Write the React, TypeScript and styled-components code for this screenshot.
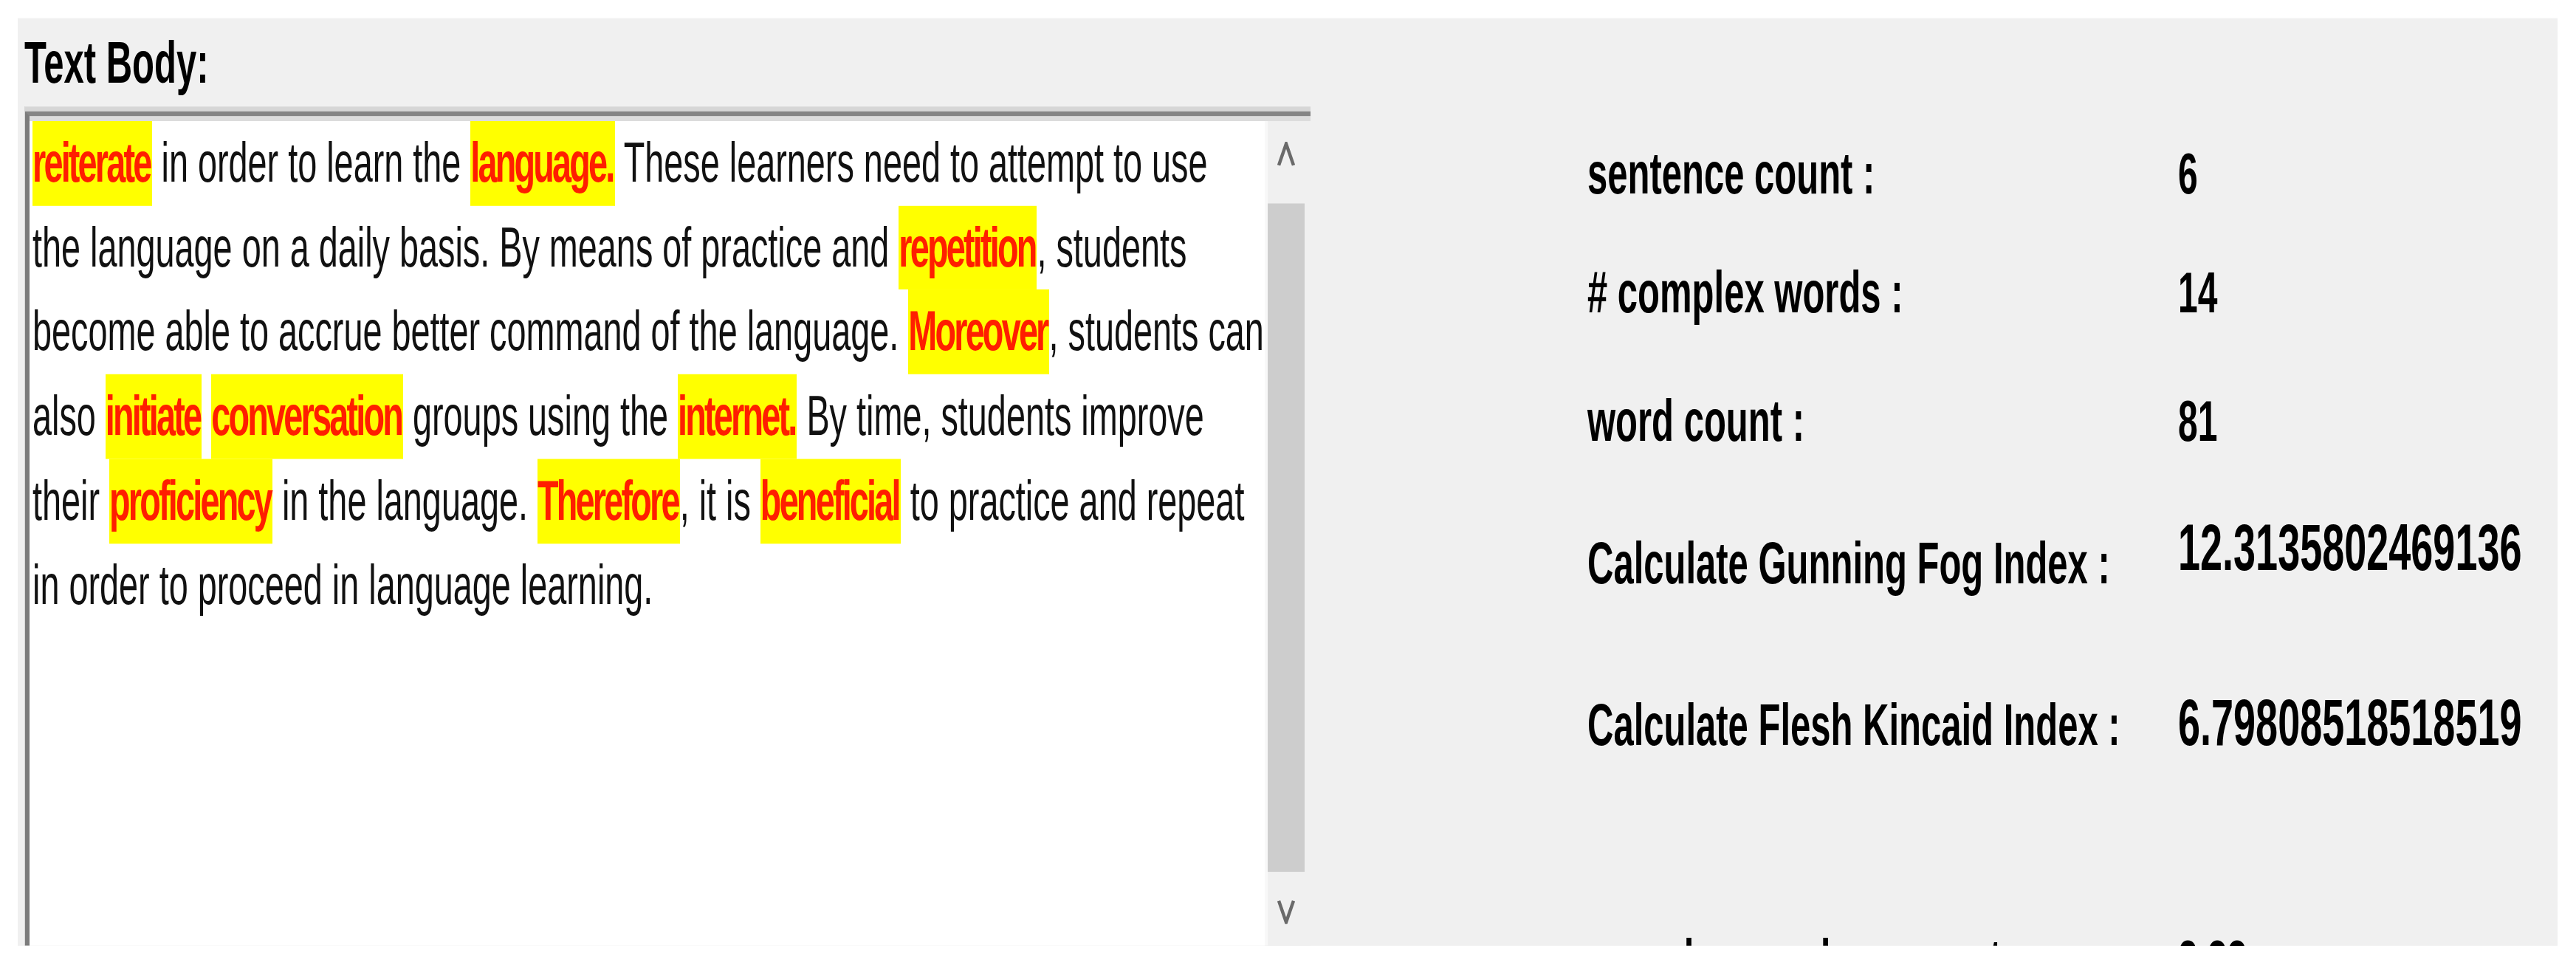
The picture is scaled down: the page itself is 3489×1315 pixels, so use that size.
import React from 'react';
import styled, { createGlobalStyle } from 'styled-components';

// the capture is stretched vertically, so the page is laid out flat and scaled on Y
const STRETCH = 1.64;
const px = (real: number) => `${(real / STRETCH).toFixed(2)}px`;

const GlobalStyle = createGlobalStyle`
	body {
		margin: 0;
		padding: 0;
		background: #fff;
		font-family: 'Liberation Sans', Arial, sans-serif;
	}
`;

const Viewport = styled.div`
	width: 3489px;
	height: 1315px;
	overflow: hidden;
	background: #fff;
`;

const Screen = styled.div`
	box-sizing: border-box;
	width: 3489px;
	height: ${px(1315)};
	padding: ${px(25)} 0 0 24px;
	transform: scaleY(${STRETCH});
	transform-origin: 0 0;
`;

const Window = styled.div`
	display: flex;
	width: 3440px;
	height: ${px(1256)};
	background: #f0f0f0;
	overflow: hidden;
`;

const LeftColumn = styled.div`
	display: flex;
	flex-direction: column;
	flex: none;
	width: 1742px;
	padding-left: 9px;
`;

const Caption = styled.div`
	margin-top: ${px(19)};
	font-size: 49px;
	font-weight: bold;
	line-height: 1;
	color: #000;
`;

const TextBox = styled.div`
	display: flex;
	flex-direction: column;
	flex: 1;
	min-height: 0;
	margin-top: ${px(19.6)};
	border-top: ${px(7)} solid #d6d6d6;
	border-left: 1px solid #d6d6d6;
`;

const Frame = styled.div`
	display: flex;
	flex-direction: column;
	flex: 1;
	min-height: 0;
	border-top: ${px(7)} solid #858585;
	border-left: 6px solid #7c7c7c;
`;

const Body = styled.div`
	display: flex;
	flex: 1;
	min-height: 0;
	border-top: ${px(7)} solid #dcdcdc;
`;

const Document = styled.div`
	flex: 1;
	padding-left: 4px;
	background: #fff;
	color: #111;
	font-size: 46.8px;
	line-height: ${px(114.4)};
	overflow: hidden;
`;

const Line = styled.div`
	white-space: nowrap;
`;

const Mark = styled.span`
	display: inline-block;
	padding-right: 2px;
	background: #ffff00;
	color: #ff1e00;
	font-weight: bold;
	letter-spacing: -2.8px;
`;

const Scrollbar = styled.div`
	display: flex;
	flex-direction: column;
	flex: none;
	box-sizing: border-box;
	width: 62px;
	padding-right: 8px;
	border-left: 4px solid #f8f8f8;
	background: #f0f0f0;
`;

const ScrollButton = styled.div<{ $height?: number; $pad: number }>`
	display: flex;
	justify-content: center;
	align-items: flex-start;
	box-sizing: border-box;
	padding-top: ${(p) => px(p.$pad)};
	${(p) => (p.$height ? `height: ${px(p.$height)};` : 'flex: 1;')}
`;

const Thumb = styled.div`
	height: ${px(906)};
	background: #cdcdcd;
`;

const RightColumn = styled.div`
	display: flex;
	flex-direction: column;
	padding-left: 375px;
`;

const StatRow = styled.div<{ $gap: number }>`
	flex: none;
	height: 60px;
	margin-top: ${(p) => px(p.$gap)};
	font-size: 49px;
	font-weight: bold;
	line-height: 60px;
	color: #000;
	white-space: nowrap;
`;

const StatLabel = styled.span`
	display: inline-block;
	width: 800px;
`;

const StatValue = styled.span<{ $size: number; $raise: number }>`
	display: inline-block;
	font-size: ${(p) => p.$size}px;
	line-height: 1;
	transform: translateY(${(p) => -p.$raise}px);
`;

const Chevron = ({ down }: { down?: boolean }) => (
	<svg width='24' height={px(35)} viewBox='0 0 24 35' preserveAspectRatio='none'>
		<path
			d={down ? 'M2 3 L12 32 L22 3' : 'M2 32 L12 3 L22 32'}
			fill='none'
			stroke='#6a6a6a'
			strokeWidth='4.5'
			strokeLinejoin='miter'
		/>
	</svg>
);

const TEXT = [
	'[reiterate] in order to learn the [language.] These learners need to attempt to use',
	'the language on a daily basis. By means of practice and [repetition], students',
	'become able to accrue better command of the language. [Moreover], students can',
	'also [initiate] [conversation] groups using the [internet.] By time, students improve',
	'their [proficiency] in the language. [Therefore], it is [beneficial] to practice and repeat',
	'in order to proceed in language learning.',
];

const STATS = [
	{ label: 'sentence count :', value: '6', gap: 161, size: 48, raise: 0 },
	{ label: '# complex words :', value: '14', gap: 61.5, size: 48, raise: 0 },
	{ label: 'word count :', value: '81', gap: 75.6, size: 48, raise: 0 },
	{ label: 'Calculate Gunning Fog Index :', value: '12.3135802469136', gap: 94.6, size: 54, raise: 11 },
	{ label: 'Calculate Flesh Kincaid Index :', value: '6.79808518518519', gap: 119.5, size: 54, raise: 0 },
	{ label: 'complex words per sentence :', value: '2.33', gap: 222, size: 48, raise: 0 },
];

function renderLine(line: string) {
	return line.split(/(\[[^\]]+\])/).map((part, i) =>
		part.startsWith('[') ? <Mark key={i}>{part.slice(1, -1)}</Mark> : <React.Fragment key={i}>{part}</React.Fragment>
	);
}

export default function App(): JSX.Element {
	return (
		<Viewport>
			<GlobalStyle />
			<Screen>
				<Window>
					<LeftColumn>
						<Caption>Text Body:</Caption>
						<TextBox>
							<Frame>
								<Body>
									<Document>
										{TEXT.map((line, i) => (
											<Line key={i}>{renderLine(line)}</Line>
										))}
									</Document>
									<Scrollbar>
										<ScrollButton $height={112} $pad={28}>
											<Chevron />
										</ScrollButton>
										<Thumb />
										<ScrollButton $pad={35}>
											<Chevron down />
										</ScrollButton>
									</Scrollbar>
								</Body>
							</Frame>
						</TextBox>
					</LeftColumn>

					<RightColumn>
						{STATS.map((s) => (
							<StatRow key={s.label} $gap={s.gap}>
								<StatLabel>{s.label}</StatLabel>
								<StatValue $size={s.size} $raise={s.raise}>
									{s.value}
								</StatValue>
							</StatRow>
						))}
					</RightColumn>
				</Window>
			</Screen>
		</Viewport>
	);
}
